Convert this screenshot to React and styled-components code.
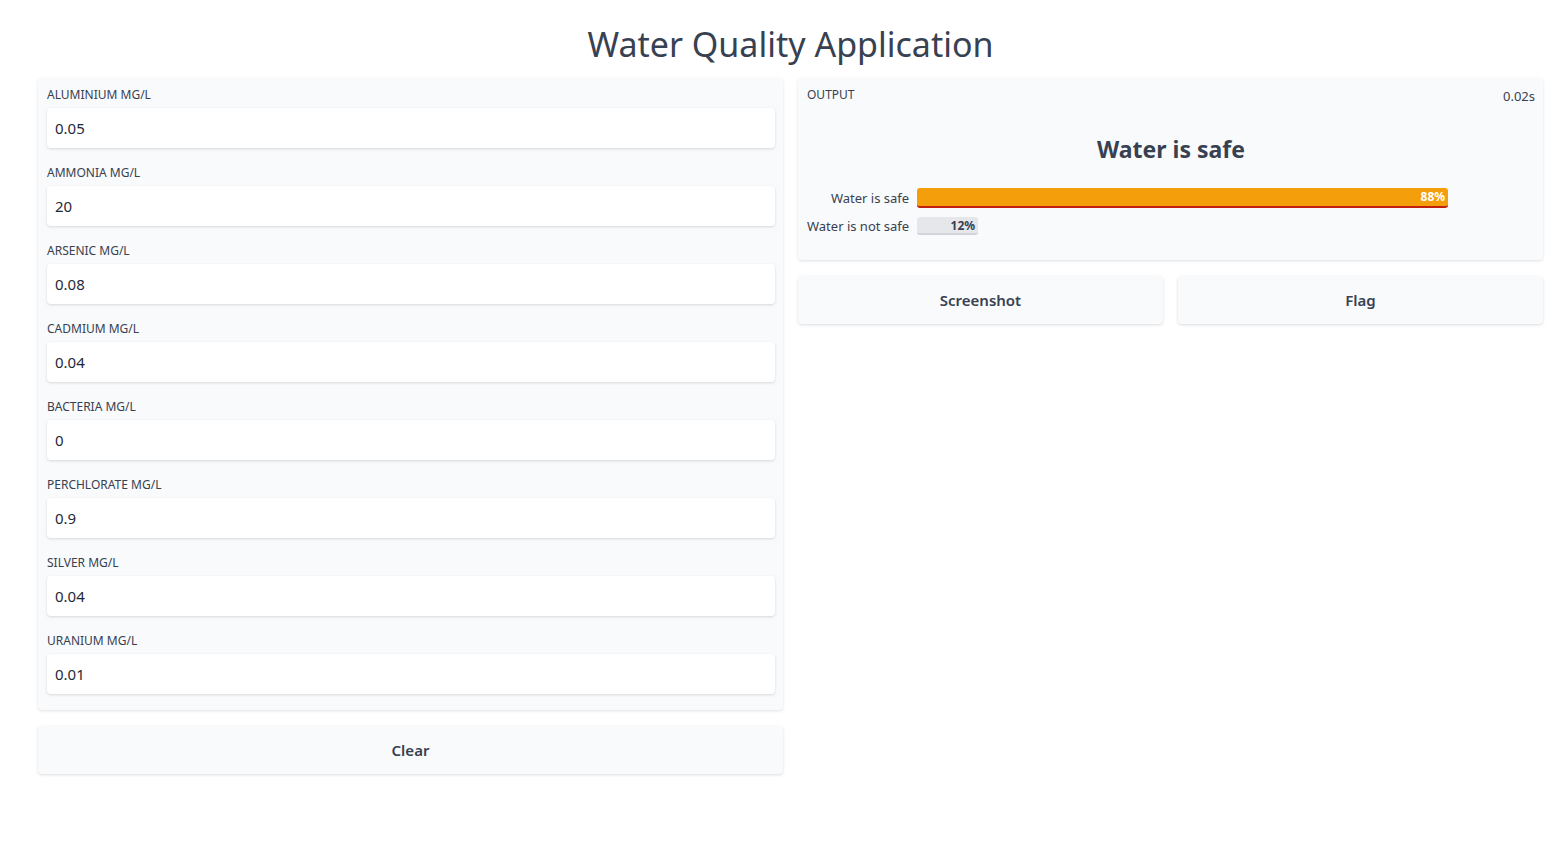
import styled, { createGlobalStyle } from "styled-components";

const GlobalStyle = createGlobalStyle`
body{
    margin:0;
    background-color:white;
    font-family:"Noto Sans","Open Sans",sans-serif;
    color:#1f2937;
}
`

const Page = styled.div`
width:100%;
padding:0 19px 40px 38px;
box-sizing:border-box;
`

const Title = styled.h1`
margin:0;
padding:20px 0 10px;
text-align:center;
font-weight:400;
font-size:34px;
line-height:48px;
color:#374151;
`

const Columns = styled.div`
display:grid;
grid-template-columns:745px 745px;
gap:15px;
align-items:start;
`

const Column = styled.div`
display:flex;
flex-direction:column;
gap:16px;
`

const Panel = styled.div`
background-color:#f9fafb;
border-radius:4px;
box-shadow:0 1px 3px rgba(0,0,0,.12);
padding:${({$padding})=>$padding || "8px 8px 16px 9px"};
box-sizing:border-box;
`

const Field = styled.label`
display:flex;
flex-direction:column;
margin-top:${({$first})=>$first ? "0" : "16px"};
`

const FieldLabel = styled.span`
font-size:12px;
line-height:16px;
height:22px;
padding-top:1px;
box-sizing:border-box;
text-transform:uppercase;
color:#374151;
`

const Input = styled.input`
height:40px;
box-sizing:border-box;
border:none;
border-radius:4px;
padding:0 8px;
background-color:white;
box-shadow:0 1px 3px rgba(0,0,0,.14);
font-family:inherit;
font-size:15px;
color:#1f2937;
outline:none;
`

const Button = styled.button`
height:48px;
width:100%;
border:none;
border-radius:4px;
background-color:#f9fafb;
box-shadow:0 1px 3px rgba(0,0,0,.14);
font-family:inherit;
font-size:15px;
font-weight:600;
color:#374151;
cursor:pointer;
`

const ButtonRow = styled.div`
display:grid;
grid-template-columns:1fr 1fr;
gap:15px;
`

const OutputHeader = styled.div`
display:flex;
justify-content:space-between;
align-items:flex-start;
`

const Small = styled.span`
font-size:12px;
line-height:16px;
color:#374151;
padding-top:1px;
`

const Time = styled.span`
font-size:13px;
color:#374151;
padding-top:1px;
`

const Verdict = styled.div`
text-align:center;
font-size:23px;
font-weight:700;
color:#374151;
margin-top:28px;
margin-bottom:23px;
`

const Bars = styled.div`
display:grid;
grid-template-columns:auto 1fr;
column-gap:8px;
row-gap:9px;
align-items:center;
`

const BarLabel = styled.span`
font-size:13px;
color:#374151;
text-align:right;
`

const Bar = styled.div`
height:${({$top})=>$top ? "20px" : "18px"};
box-sizing:border-box;
border-radius:3px;
background-color:${({$top})=>$top ? "#f59e0b" : "#e5e7eb"};
border-bottom:2px solid ${({$top})=>$top ? "#c2200f" : "#d1d5db"};
color:${({$top})=>$top ? "white" : "#374151"};
font-size:12px;
font-weight:700;
line-height:18px;
text-align:right;
padding-right:3px;
`

const FIELDS = [
    ["Aluminium mg/L","0.05"],
    ["Ammonia mg/L","20"],
    ["Arsenic mg/L","0.08"],
    ["Cadmium mg/L","0.04"],
    ["Bacteria mg/L","0"],
    ["Perchlorate mg/L","0.9"],
    ["Silver mg/L","0.04"],
    ["Uranium mg/L","0.01"],
];

const RESULTS = [
    {label:"Water is safe", value:"88%", width:531},
    {label:"Water is not safe", value:"12%", width:61},
];

export default function App(){
    return(
        <>
            <GlobalStyle/>
            <Page>
                <Title>Water Quality Application</Title>
                <Columns>
                    <Column>
                        <Panel>
                            {FIELDS.map(([label,value],i)=>(
                                <Field key={label} $first={i===0}>
                                    <FieldLabel>{label}</FieldLabel>
                                    <Input defaultValue={value}/>
                                </Field>
                            ))}
                        </Panel>
                        <Button>Clear</Button>
                    </Column>
                    <Column>
                        <Panel $padding="8px 8px 25px 9px">
                            <OutputHeader>
                                <Small>OUTPUT</Small>
                                <Time>0.02s</Time>
                            </OutputHeader>
                            <Verdict>Water is safe</Verdict>
                            <Bars>
                                {RESULTS.map((r,i)=>[
                                    <BarLabel key={r.label}>{r.label}</BarLabel>,
                                    <div key={r.label+"bar"}>
                                        <Bar $top={i===0} style={{width:r.width}}>{r.value}</Bar>
                                    </div>
                                ])}
                            </Bars>
                        </Panel>
                        <ButtonRow>
                            <Button>Screenshot</Button>
                            <Button>Flag</Button>
                        </ButtonRow>
                    </Column>
                </Columns>
            </Page>
        </>
    )
}
